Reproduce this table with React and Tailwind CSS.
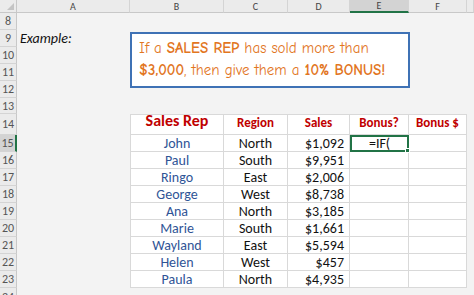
const cols = ['A', 'B', 'C', 'D', 'E', 'F', '']

const reps = [
  ['John', 'North', '$1,092'],
  ['Paul', 'South', '$9,951'],
  ['Ringo', 'East', '$2,006'],
  ['George', 'West', '$8,738'],
  ['Ana', 'North', '$3,185'],
  ['Marie', 'South', '$1,661'],
  ['Wayland', 'East', '$5,594'],
  ['Helen', 'West', '$457'],
  ['Paula', 'North', '$4,935'],
]

const calibri = { fontFamily: 'Carlito, Calibri, Lato, "Open Sans", sans-serif' }

function RowHead({ n, active }) {
  return (
    <div
      className={`flex items-center justify-center text-[12px] text-[#555] border-b border-[#d4d4d4] ${
        active ? 'bg-[#d3d3d3] border-r-2 border-r-[#217346]' : 'bg-[#ebebeb] border-r border-r-[#c8c8c8]'
      }`}
    >
      {n}
    </div>
  )
}

function Blank({ n }) {
  return (
    <>
      <RowHead n={n} />
      <div className="col-span-7 bg-[#f3f3f3]" />
    </>
  )
}

export default function App() {
  return (
    <div className="relative w-[474px] h-[295px] overflow-hidden bg-[#f3f3f3]" style={calibri}>
      <div className="grid grid-cols-[17px_113px_94px_64px_62px_59px_58px_1fr] grid-rows-[13px_repeat(5,17px)_16px_21px_repeat(9,17px)_1fr] h-full">
        {/* column headers */}
        <div className="relative bg-[#ebebeb] border-r border-b border-[#c8c8c8]">
          <div className="absolute right-[2px] bottom-[2px] w-0 h-0 border-l-[7px] border-l-transparent border-b-[7px] border-b-[#c4c4c4]" />
        </div>
        {cols.map((c) => (
          <div
            key={c || 'g'}
            className={`flex items-center justify-center text-[10px] leading-[11px] text-[#444] border-r border-[#d4d4d4] ${
              c === 'E' ? 'bg-[#d3d3d3] border-b-2 border-b-[#217346]' : 'bg-[#ebebeb] border-b border-b-[#c8c8c8]'
            }`}
          >
            {c}
          </div>
        ))}

        <Blank n={8} />
        <RowHead n={9} />
        <div className="flex items-center pl-[3px] text-[14px] italic text-[#111] bg-[#f3f3f3]">Example:</div>
        <div className="col-span-6 bg-[#f3f3f3]" />
        <Blank n={10} />
        <Blank n={11} />
        <Blank n={12} />
        <Blank n={13} />

        {/* table header */}
        <RowHead n={14} />
        <div className="bg-[#f3f3f3]" />
        <div className="flex items-end justify-center pb-[1px] bg-white border border-[#d9d9d9] text-[16px] font-bold text-[#c00000]">
          Sales Rep
        </div>
        {['Region', 'Sales', 'Bonus?', 'Bonus $'].map((h) => (
          <div
            key={h}
            className="flex items-end justify-center pb-[2px] bg-white border-t border-r border-b border-[#d9d9d9] text-[13px] font-bold text-[#c00000]"
          >
            {h}
          </div>
        ))}
        <div className="bg-[#f3f3f3]" />

        {reps.map(([name, region, sales], i) => (
          <div key={name} className="contents">
            <RowHead n={15 + i} active={i === 0} />
            <div className="bg-[#f3f3f3]" />
            <div className="flex items-center justify-center bg-white border-l border-r border-b border-[#d9d9d9] text-[14px] text-[#2f5496]">
              {name}
            </div>
            <div className="flex items-center justify-center bg-white border-r border-b border-[#d9d9d9] text-[14px] text-[#111]">
              {region}
            </div>
            <div className="flex items-center justify-end pr-[5px] bg-white border-r border-b border-[#d9d9d9] text-[14px] text-[#111]">
              {sales}
            </div>
            {i === 0 ? (
              <div className="relative flex items-center justify-center bg-white border-2 border-[#217346] text-[14px] text-[#111]">
                =IF(
                <div className="absolute -right-[3px] -bottom-[3px] w-[5px] h-[5px] bg-[#217346] border border-white" />
              </div>
            ) : (
              <div className="bg-white border-r border-b border-[#d9d9d9]" />
            )}
            <div className="bg-white border-r border-b border-[#d9d9d9]" />
            <div className="bg-[#f3f3f3]" />
          </div>
        ))}

        <RowHead n={24} />
        <div className="col-span-7 bg-[#f3f3f3]" />
      </div>

      {/* floating text box */}
      <div
        className="absolute left-[130px] top-[32px] w-[280px] h-[56px] bg-white border-2 border-[#3f72b5] px-[7px] pt-[3px] text-[15px] leading-[22px] text-[#e2761f]"
        style={{ fontFamily: '"Comic Sans MS", "Comic Neue", Lato, sans-serif' }}
      >
        <div>
          If a <b>SALES REP</b> has sold more than
        </div>
        <div>
          <b>$3,000</b>, then give them a <b>10% BONUS!</b>
        </div>
      </div>
    </div>
  )
}
